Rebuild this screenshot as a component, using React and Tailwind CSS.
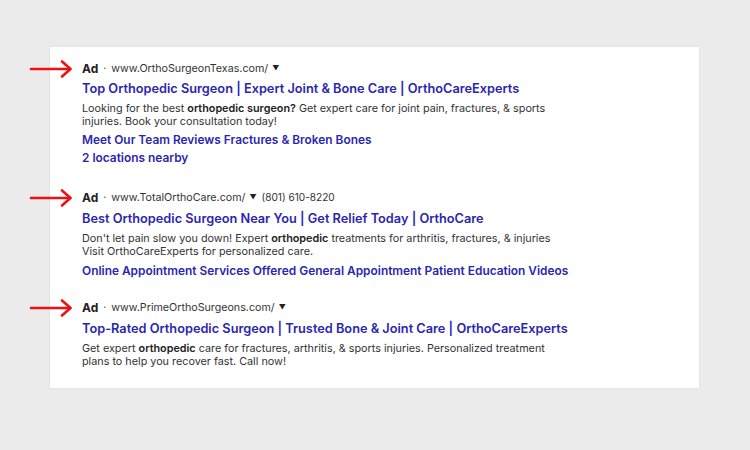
import React from "react";

const font = { fontFamily: "Inter, 'Open Sans', sans-serif" };

function Arrow() {
  return (
    <svg
      className="absolute left-[-53px] top-[-1px]"
      width="46"
      height="18"
      viewBox="0 0 46 18"
      fill="none"
    >
      <path d="M2 9 H41" stroke="#ee1111" strokeWidth="2.6" strokeLinecap="round" />
      <path d="M33 1.5 L41.5 9 L33 16.5" stroke="#ee1111" strokeWidth="2.6" strokeLinecap="round" strokeLinejoin="round" />
    </svg>
  );
}

function AdRow({ url, phone }) {
  return (
    <div className="relative flex items-center h-4 text-[10.7px] text-[#333]">
      <Arrow />
      <span className="font-bold text-[12px] text-[#222]">Ad</span>
      <span className="mx-[5px] text-[#555]">·</span>
      <span>{url}</span>
      <span className="ml-[4px] text-[7px] text-[#222]">▼</span>
      {phone && <span className="ml-[5px] text-[10.1px]">{phone}</span>}
    </div>
  );
}

function Title({ children, className = "" }) {
  return (
    <div className={"text-[12.75px] leading-[18px] font-semibold text-[#2a26b0] " + className}>
      {children}
    </div>
  );
}

function Desc({ children }) {
  return (
    <div className="mt-[4px] text-[10.8px] leading-[13px] text-[#333]">{children}</div>
  );
}

function Link({ children, className = "" }) {
  return (
    <div className={"text-[11.9px] leading-[18px] font-semibold text-[#2a26b0] " + className}>
      {children}
    </div>
  );
}

export default function App() {
  return (
    <div className="w-[750px] h-[450px] bg-[#ebebeb] pt-[47px] pl-[50px]" style={font}>
      <div className="w-[649px] h-[341px] bg-white shadow-[0_0_2px_rgba(0,0,0,0.08)] pl-[32px] pt-[14px]">
        <AdRow url="www.OrthoSurgeonTexas.com/" />
        <Title className="mt-[3px]">
          Top Orthopedic Surgeon | Expert Joint &amp; Bone Care | OrthoCareExperts
        </Title>
        <Desc>
          Looking for the best <b className="font-semibold text-[#222]">orthopedic surgeon?</b> Get expert care for joint pain, fractures, &amp; sports
          <br />
          injuries. Book your consultation today!
        </Desc>
        <Link className="mt-[3px]">Meet Our Team Reviews Fractures &amp; Broken Bones</Link>
        <Link>2 locations nearby</Link>

        <div className="mt-[23px]">
          <AdRow url="www.TotalOrthoCare.com/" phone="(801) 610-8220" />
        </div>
        <Title className="mt-[4px]">
          Best Orthopedic Surgeon Near You | Get Relief Today | OrthoCare
        </Title>
        <Desc>
          Don't let pain slow you down! Expert <b className="font-semibold text-[#222]">orthopedic</b> treatments for arthritis, fractures, &amp; injuries
          <br />
          Visit OrthoCareExperts for personalized care.
        </Desc>
        <Link className="mt-[4px]">
          Online Appointment Services Offered General Appointment Patient Education Videos
        </Link>

        <div className="mt-[20px]">
          <AdRow url="www.PrimeOrthoSurgeons.com/" />
        </div>
        <Title className="mt-[4px]">
          Top-Rated Orthopedic Surgeon | Trusted Bone &amp; Joint Care | OrthoCareExperts
        </Title>
        <Desc>
          Get expert <b className="font-semibold text-[#222]">orthopedic</b> care for fractures, arthritis, &amp; sports injuries. Personalized treatment
          <br />
          plans to help you recover fast. Call now!
        </Desc>
      </div>
    </div>
  );
}
